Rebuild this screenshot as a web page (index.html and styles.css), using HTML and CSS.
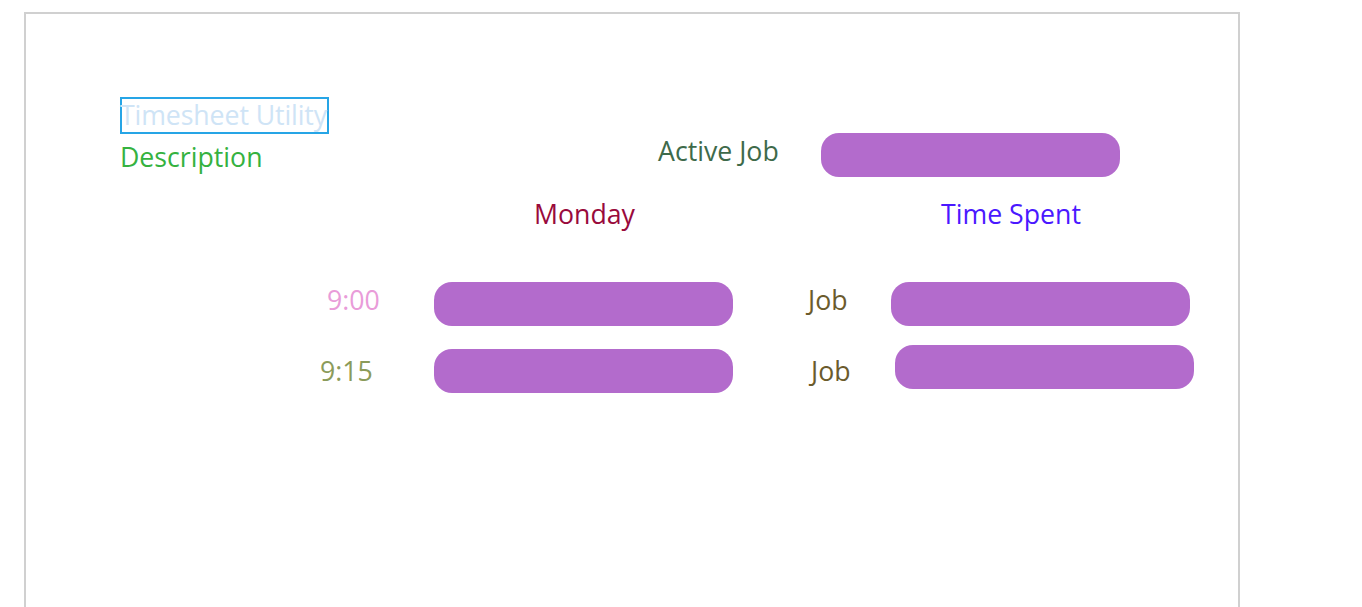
FILE: index.html
```html
<!DOCTYPE html>
<html>
<head>
<meta charset="utf-8">
<link rel="stylesheet" href="styles.css">
</head>
<body>
<div class="screen">
  <div class="canvas">
    <div class="ctl title">Timesheet Utility</div>
    <div class="ctl desc">Description</div>
    <div class="ctl lbl-active">Active Job</div>
    <div class="ctl input in-active"></div>
    <div class="ctl lbl-monday">Monday</div>
    <div class="ctl lbl-spent">Time Spent</div>
    <div class="ctl time t900">9:00</div>
    <div class="ctl input in-900"></div>
    <div class="ctl job job1">Job</div>
    <div class="ctl input in-job1"></div>
    <div class="ctl time t915">9:15</div>
    <div class="ctl input in-915"></div>
    <div class="ctl job job2">Job</div>
    <div class="ctl input in-job2"></div>
  </div>
</div>
</body>
</html>
```
FILE: styles.css
```css
html, body {
  margin: 0;
  padding: 0;
  background: #fff;
  overflow: hidden;
}
body {
  font-family: "Open Sans", "Noto Sans", sans-serif;
  width: 1362px;
  height: 607px;
}
.screen {
  padding: 12px 0 0 24px;
}
.canvas {
  position: relative;
  width: 1212px;
  height: 620px;
  border: 2px solid #d0d0d0;
  border-bottom: none;
}
.ctl {
  position: absolute;
  font-size: 26.7px;
  line-height: 36px;
  white-space: nowrap;
}
.input {
  background: #b36bcc;
  border-radius: 18px;
  width: 299px;
  height: 44px;
}
.title {
  left: 94px;
  top: 83px;
  width: 205px;
  height: 33px;
  line-height: 32px;
  border: 2px solid #26a5e6;
  color: #cfe4f6;
  text-indent: -2px;
  letter-spacing: -0.1px;
}
.desc { left: 94px; top: 125px; color: #35b23f; }
.lbl-active { left: 632px; top: 119px; color: #3e6a4a; }
.in-active { left: 795px; top: 119px; }
.lbl-monday { left: 508px; top: 182px; color: #990a3b; }
.lbl-spent { left: 915px; top: 182px; color: #4a18ff; }
.t900 { left: 301px; top: 268px; color: #e99cd9; }
.in-900 { left: 408px; top: 268px; }
.job1 { left: 782px; top: 268px; color: #6b5b2c; }
.in-job1 { left: 865px; top: 268px; }
.t915 { left: 294px; top: 339px; color: #8b9b5a; }
.in-915 { left: 408px; top: 335px; }
.job2 { left: 785px; top: 339px; color: #6b5b2c; }
.in-job2 { left: 869px; top: 331px; }
```
